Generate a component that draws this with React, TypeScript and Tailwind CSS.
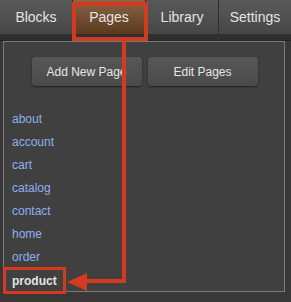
export default function App() {
  const pages = ["about", "account", "cart", "catalog", "contact", "home", "order"];
  const tabs = ["Blocks", "Pages", "Library", "Settings"];
  return (
    <div
      className="relative w-[291px] h-[302px] overflow-hidden bg-[#383838]"
      style={{ fontFamily: '"Liberation Sans", Arial, sans-serif' }}
    >
      <div className="flex h-[34px] bg-gradient-to-b from-[#595959] to-[#474747]">
        {tabs.map((t, i) => (
          <div
            key={t}
            className={
              "flex-1 flex items-center justify-center pt-[1px] text-[14px] text-[#e4e4e4] border-r border-[#2e2e2e] last:border-r-0 " +
              (i === 1 ? "bg-gradient-to-b from-[#8c6446] to-[#5a3a1e]" : "")
            }
          >
            {t}
          </div>
        ))}
      </div>
      <div className="h-[7px] bg-[#303030] border-b border-[#262626]" />
      <div className="ml-[3px] mr-[6px] h-[251px] border border-[#7a7a7a] bg-[#404040]">
        <div className="flex justify-center gap-[6px] pt-[15px] pl-[1px]">
          <div className="w-[110px] h-[29px] rounded-[4px] bg-gradient-to-b from-[#575757] to-[#4a4a4a] shadow-[0_1px_2px_rgba(0,0,0,0.5)] flex items-center justify-center text-[12px] text-[#e6e6e6]">
            Add New Page
          </div>
          <div className="w-[110px] h-[29px] rounded-[4px] bg-gradient-to-b from-[#575757] to-[#4a4a4a] shadow-[0_1px_2px_rgba(0,0,0,0.5)] flex items-center justify-center text-[12px] text-[#e6e6e6]">
            Edit Pages
          </div>
        </div>
        <div className="pl-[8px] pt-[21px] flex flex-col">
          {pages.map((p) => (
            <div key={p} className="h-[23.15px] flex items-center text-[12px] text-[#8cb0ee]">
              {p}
            </div>
          ))}
          <div className="h-[23.15px] flex items-center text-[12px] font-bold text-[#e4e4e4]">
            product
          </div>
        </div>
      </div>
      {/* annotations */}
      <div className="absolute left-[72px] top-[2px] w-[76px] h-[39px] border-[4px] border-[#d33a1f]" />
      <div className="absolute left-[122px] top-[41px] w-[4px] h-[242px] bg-[#d33a1f]" />
      <div className="absolute left-[86px] top-[279px] w-[40px] h-[4px] bg-[#d33a1f]" />
      <svg className="absolute left-[66px] top-[272px]" width="22" height="22" viewBox="0 0 22 22">
        <polygon points="1,10 21,1 21,19" fill="#d33a1f" />
      </svg>
      <div className="absolute left-[3px] top-[267px] w-[63px] h-[27px] border-[3px] border-[#d33a1f]" />
    </div>
  );
}
